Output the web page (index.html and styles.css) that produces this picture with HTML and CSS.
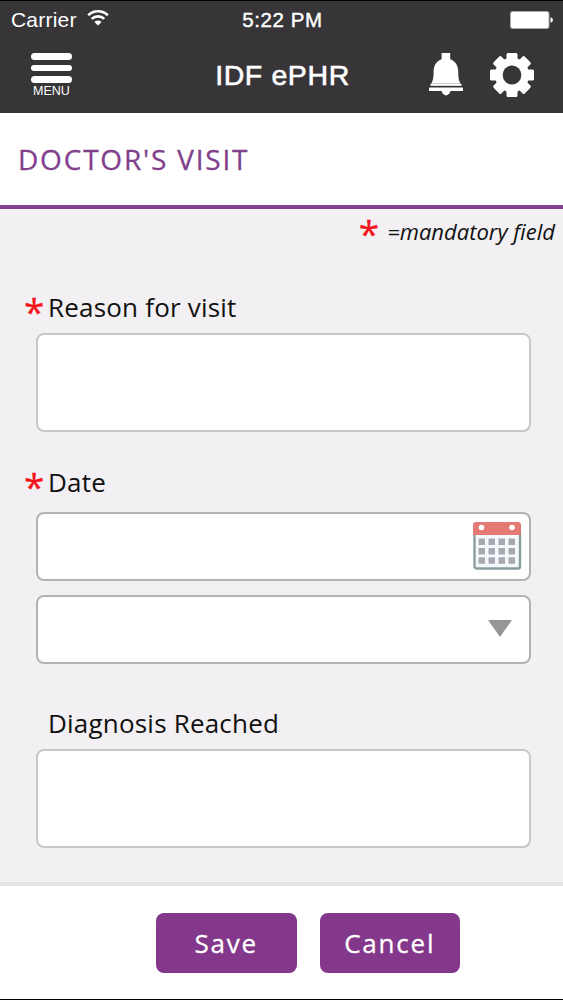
FILE: index.html
```html
<!DOCTYPE html>
<html lang="en">
<head>
  <meta charset="UTF-8" />
  <meta name="viewport" content="width=device-width, initial-scale=1.0"/>
  <title>IDF ePHR - Doctor's Visit</title>
  <link rel="stylesheet" href="styles.css">
</head>
<body>
  <div class="app">
    <header class="header">
      <div class="status-bar">
        <div class="carrier">
          <span>Carrier</span>
          <svg class="wifi" width="22" height="17" viewBox="0 0 22 17" fill="none" stroke="#fff" stroke-width="2.6">
            <path d="M1.2 6.2a14 14 0 0 1 19.6 0"/>
            <path d="M4.7 9.9a9 9 0 0 1 12.6 0"/>
            <path d="M11 16.6l-3.6-3.7a5.2 5.2 0 0 1 7.2 0z" fill="#fff" stroke="none"/>
          </svg>
        </div>
        <span class="time">5:22 PM</span>
        <div class="power">
          <svg width="44" height="18" viewBox="0 0 44 18">
            <rect x="0.5" y="0.5" width="38.5" height="17" rx="2" fill="#fff" stroke="#aaa8aa"/>
            <path d="M40.5 6.2q2.5 .6 2.5 2.8t-2.5 2.8z" fill="#fff"/>
          </svg>
        </div>
      </div>

      <div class="nav-bar">
        <div class="menu">
          <span class="menu-bar"></span>
          <span class="menu-bar"></span>
          <span class="menu-bar"></span>
          <span class="menu-label">MENU</span>
        </div>
        <h1 class="app-title">IDF ePHR</h1>
        <div class="actions">
          <svg class="bell" width="34" height="43" viewBox="0 0 34 43" fill="#fff">
            <path d="M12.6 0h8.6v6.2c5.4 2 8 6.6 8 12.3 0 5.6 .4 9.5 2.6 12.3H2c2.2-2.8 2.6-6.7 2.6-12.3 0-5.7 2.6-10.3 8-12.3z"/>
            <rect x="1.5" y="31" width="31" height="1.8"/>
            <rect x="0" y="34.6" width="34" height="3.4" rx=".6"/>
            <path d="M12.5 38h9l-1 2.3q-3.5 4.2-7 0z"/>
          </svg>
          <svg class="gear" width="44" height="44" viewBox="-22 -22 44 44">
            <g fill="#fff">
              <circle r="17.2"/>
              <path id="tooth" d="M-5.5-14v-6.5q0-1.5 1.5-1.5h8q1.5 0 1.5 1.5v6.5z"/>
              <use href="#tooth" transform="rotate(45)"/>
              <use href="#tooth" transform="rotate(90)"/>
              <use href="#tooth" transform="rotate(135)"/>
              <use href="#tooth" transform="rotate(180)"/>
              <use href="#tooth" transform="rotate(225)"/>
              <use href="#tooth" transform="rotate(270)"/>
              <use href="#tooth" transform="rotate(315)"/>
            </g>
            <circle r="9.4" fill="#373538"/>
          </svg>
        </div>
      </div>
    </header>

    <div class="page-title">
      <h2>DOCTOR'S VISIT</h2>
    </div>

    <main class="form">
      <p class="mandatory"><span class="star">*</span><em>=mandatory field</em></p>

      <div class="group reason">
        <label class="label"><span class="star">*</span><span>Reason for visit</span></label>
        <div class="field field-large"></div>
      </div>

      <div class="group date">
        <label class="label"><span class="star">*</span><span>Date</span></label>
        <div class="field field-date">
          <svg width="49" height="48" viewBox="0 0 49 48">
            <rect x="1.5" y="8" width="45.5" height="38.5" rx="2" fill="#f5f9fc" stroke="#8b9da0" stroke-width="2.4"/>
            <path d="M0 13V3q0-3 3-3h42q3 0 3 3v10z" fill="#e37b74"/>
            <circle cx="8.5" cy="5.5" r="2.8" fill="#fff"/>
            <circle cx="39" cy="5.5" r="2.8" fill="#fff"/>
            <g fill="#a8a8b3">
              <path d="M5.5 16.5h6.5v6.5h-6.5zM15.5 16.5h6.5v6.5h-6.5zM25.5 16.5h6.5v6.5h-6.5zM35.5 16.5h6.5v6.5h-6.5z"/>
              <path d="M5.5 26h6.5v6.5h-6.5zM15.5 26h6.5v6.5h-6.5zM25.5 26h6.5v6.5h-6.5zM35.5 26h6.5v6.5h-6.5z"/>
              <path d="M5.5 35.2h6.5v6.5h-6.5zM15.5 35.2h6.5v6.5h-6.5zM25.5 35.2h6.5v6.5h-6.5zM35.5 35.2h6.5v6.5h-6.5z"/>
            </g>
          </svg>
        </div>
        <div class="field field-select">
          <svg width="24" height="17" viewBox="0 0 24 17"><path d="M0 0h24L12 17z" fill="#989599"/></svg>
        </div>
      </div>

      <div class="group diagnosis">
        <label class="label"><span class="star"></span><span>Diagnosis Reached</span></label>
        <div class="field field-large"></div>
      </div>
    </main>

    <footer class="footer">
      <button class="btn">Save</button>
      <button class="btn">Cancel</button>
    </footer>
  </div>
</body>
</html>
```
FILE: styles.css
```css
* {
  margin: 0;
  padding: 0;
  box-sizing: border-box;
}

body {
  font-family: "Open Sans", "Noto Sans", sans-serif;
  background: #fff;
  color: #111;
}

.app {
  display: flex;
  flex-direction: column;
  width: 563px;
  height: 1000px;
  border-bottom: 1px solid #000;
  overflow: hidden;
}

.header {
  height: 113px;
  background: #373538;
  border-top: 1px solid #000;
  color: #fff;
  font-family: "Liberation Sans", Arial, sans-serif;
}

.status-bar {
  display: grid;
  grid-template-columns: 1fr auto 1fr;
  align-items: center;
  height: 37px;
  padding: 0 9px 0 11px;
  font-size: 21px;
}

.carrier {
  display: flex;
  align-items: center;
  gap: 10px;
  letter-spacing: 0.2px;
}

.wifi {
  margin-top: -4px;
}

.time {
  font-size: 20.5px;
  letter-spacing: 0.6px;
  -webkit-text-stroke: 0.4px #fff;
}

.power {
  display: flex;
  justify-content: flex-end;
}

.nav-bar {
  display: grid;
  grid-template-columns: 1fr auto 1fr;
  height: 75px;
  padding: 15px 29px 0 31px;
}

.menu {
  display: flex;
  flex-direction: column;
  width: 41px;
  gap: 5px;
}

.menu-bar {
  height: 6.5px;
  border-radius: 4px;
  background: #fff;
}

.menu-label {
  margin-top: -4px;
  font-size: 12.5px;
  line-height: 15px;
  text-align: center;
}

.app-title {
  font-size: 28.5px;
  line-height: 44px;
  font-weight: 400;
  letter-spacing: 0.6px;
  -webkit-text-stroke: 0.6px #fff;
}

.actions {
  display: flex;
  justify-content: flex-end;
  gap: 27px;
}

.page-title {
  height: 96px;
  padding: 27px 18px 0;
  border-bottom: 4px solid #834290;
}

.page-title h2 {
  color: #80408c;
  font-size: 28px;
  line-height: 38px;
  font-weight: 400;
  letter-spacing: 1.8px;
  -webkit-text-stroke: 0.3px #80408c;
}

.form {
  height: 673px;
  padding: 0 32px 0 24px;
  background: #f2f0f3;
}

.star {
  color: #f5141a;
  font-size: 37px;
  -webkit-text-stroke: 0.3px #f5141a;
}

.mandatory {
  display: flex;
  justify-content: flex-end;
  gap: 8px;
  height: 81px;
  margin-right: -24px;
  font-size: 22px;
  line-height: 45px;
}

.mandatory .star {
  line-height: 47px;
}

.label {
  display: flex;
  height: 43px;
  font-size: 26px;
  line-height: 35px;
  letter-spacing: 0.2px;
}

.label .star {
  width: 24px;
  line-height: 41px;
}

.field {
  display: flex;
  justify-content: flex-end;
  margin-left: 12px;
  background: #fff;
  border: 2px solid #c9c7ca;
  border-radius: 8px;
}

.field-large {
  height: 99px;
}

.date {
  margin-top: 33px;
}

.date .label {
  height: 47px;
}

.field-date {
  height: 69px;
  padding: 8px 7px;
  border-color: #b4b2b5;
}

.field-select {
  height: 69px;
  margin-top: 14px;
  padding: 23px 17px;
  border-color: #b4b2b5;
}

.diagnosis {
  margin-top: 42px;
}

.footer {
  display: flex;
  gap: 23px;
  height: 117px;
  padding: 27px 0 0 156px;
  border-top: 4px solid #e6e4e7;
  background: #fff;
}

.btn {
  width: 140.5px;
  height: 60px;
  border: none;
  border-radius: 8px;
  background: #83388b;
  color: #fff;
  font-family: inherit;
  font-size: 26px;
  letter-spacing: 1.8px;
  -webkit-text-stroke: 0.3px #fff;
}
```
